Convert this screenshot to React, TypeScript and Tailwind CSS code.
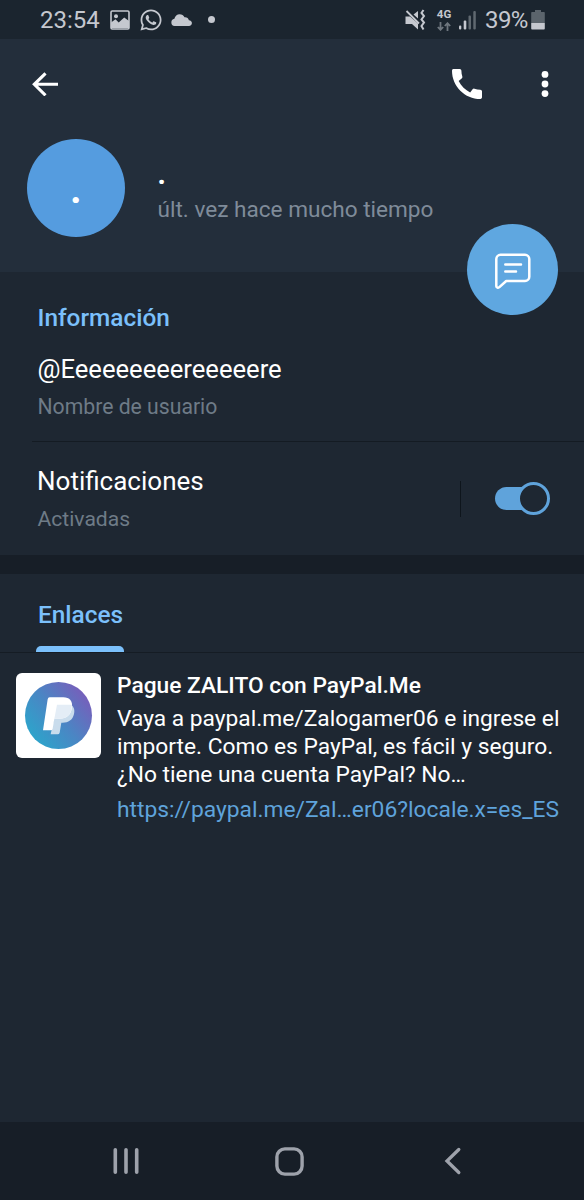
import { FaWhatsapp } from "react-icons/fa";
import { MdCall } from "react-icons/md";

function StatusBar() {
  return (
    <div className="flex h-[39px] items-center bg-[#1b252f] pl-10 text-[24px] leading-[40px] text-[#c5c8cf]">
      <span className="w-[60px]">23:54</span>
      <svg className="ml-[10px] h-5 w-5" viewBox="0 0 20 20">
        <rect x="1" y="1" width="18" height="18" rx="1.2" fill="none" stroke="currentColor" strokeWidth="1.6" />
        <circle cx="6" cy="6.2" r="2" fill="currentColor" />
        <path d="M1 18V12.500L5.500 9.300L8.700 12.400L14.200 7.600L19 11V18Z" fill="currentColor" />
      </svg>
      <FaWhatsapp className="ml-[9px] h-6 w-6" />
      <svg className="ml-2 h-3 w-[21px]" viewBox="0 0 21 12" fill="currentColor">
        <path d="M3.500 12A3.700 3.700 0 0 1 3.400 4.700C4 2 6 .2 8.600 .2C10.800 .2 12.600 1.300 13.500 3.300C15.800 3 17.400 4.300 17.900 6.200C19.800 6.300 20.900 7.500 20.900 9.100C20.900 10.800 19.700 12 18 12Z" />
      </svg>
      <span className="ml-4 h-[7px] w-[7px] rounded-full bg-current" />
      <svg className="ml-auto h-[22px] w-[21px]" viewBox="0 0 21 22" fill="currentColor">
        <path d="M0.5 7.5H5L13 14.5V20.5L7 15H0.5Z" />
        <path d="M8.5 5.5L13 2V9.5Z" />
        <path d="M1.500 2L14 14.5" stroke="currentColor" strokeWidth="1.8" />
        <path d="M18.5 1L16.5 4L19 7L16.5 10.5L19 13.5L16.5 17L18.5 20.5" fill="none" stroke="currentColor" strokeWidth="2" />
      </svg>
      <span className="ml-[10px] flex w-[16px] flex-col items-center">
        <span className="text-[11.5px] font-bold leading-[11px]">4G</span>
        <svg className="mt-[2px] h-[9px] w-[14px] text-[#6f777f]" viewBox="0 0 14 9" fill="none" stroke="currentColor" strokeWidth="1.8">
          <path d="M3.5 0V8M.8 5L3.5 7.8L6.2 5M10.5 9V1M7.8 4L10.5 1.2L13.2 4" />
        </svg>
      </span>
      <svg className="ml-[7px] h-5 w-[18px]" viewBox="0 0 18 20" fill="currentColor">
        <rect x="0" y="15.5" width="2.3" height="4" rx="1" />
        <rect x="4.7" y="10.5" width="2.6" height="9" rx="1" />
        <rect x="9.5" y="5.5" width="2.5" height="14" rx="1" fill="#606970" />
        <rect x="14.3" y="1" width="2.5" height="18.5" rx="1" fill="#606970" />
      </svg>
      <span className="ml-2 w-[46px] tracking-[-0.6px]">39%</span>
      <svg className="mr-[39px] h-5 w-[14px]" viewBox="0 0 14 20">
        <path d="M4 0H10V2H13A.8.8 0 0 1 13.8 2.8V13H.2V2.8A.8.8 0 0 1 1 2H4Z" fill="#5b646c" />
        <path d="M.2 13H13.8V18.5A1 1 0 0 1 13 19.5H1A1 1 0 0 1 .2 18.5Z" fill="currentColor" />
      </svg>
    </div>
  );
}

function Header() {
  return (
    <header className="relative h-[233px] bg-[#232e3b]">
      <div className="flex h-[90px] items-center pl-8">
        <svg className="h-6 w-[26px]" viewBox="0 0 26 24" fill="none" stroke="#fff" strokeWidth="3.1">
          <path d="M26 12.300H2.500M13.500 1.300L2.300 12.300L13.500 23.300" />
        </svg>
        <MdCall className="ml-[389px] h-10 w-10 text-white" />
        <svg className="ml-[53px] h-[26px] w-[10px]" viewBox="0 0 10 26" fill="#fff">
          <circle cx="5" cy="3.4" r="3.4" />
          <circle cx="5" cy="13" r="3.4" />
          <circle cx="5" cy="22.6" r="3.4" />
        </svg>
      </div>
      <div className="flex pl-[27px] pt-[10px]">
        <div className="h-[98px] w-[98px] rounded-full bg-[#559cdf] text-center text-[46px] font-medium leading-[96px] text-white">
          .
        </div>
        <div className="ml-8 pt-[19px]">
          <div className="h-[38px] text-[34px] font-medium leading-[28px] text-white">.</div>
          <div className="pl-[0.5px] text-[22.6px] leading-[28px] text-[#7f8b99]">últ. vez hace mucho tiempo</div>
        </div>
      </div>
      <button className="absolute left-[467px] top-[185px] flex h-[91px] w-[91px] items-center justify-center rounded-full bg-[#5fa7e0]">
        <svg className="mt-[2px] h-9 w-9" viewBox="0 0 36 36" fill="none" stroke="#fff" strokeWidth="2.5" strokeLinecap="round" strokeLinejoin="round">
          <path d="M5.500 1.800H30A4.300 4.300 0 0 1 34.300 6V23.700A4.300 4.300 0 0 1 30 28H11.200L4.400 34.200C3.300 35.200 1.300 34.500 1.300 33.200V6A4.300 4.300 0 0 1 5.500 1.800Z" />
          <path d="M10.300 11.500H26M10.300 18.500H21" />
        </svg>
      </button>
    </header>
  );
}

function Info() {
  return (
    <section className="h-[283px] pt-8">
      <div className="pl-[37.5px]">
        <h2 className="text-[24.4px] font-medium leading-[28px] text-[#7bc0fb]">Información</h2>
        <div className="mt-[23px] text-[25.6px] leading-[28px] text-white">@Eeeeeeeeereeeeere</div>
        <div className="mt-[10px] text-[21.2px] leading-[28px] text-[#6e7b87]">Nombre de usuario</div>
      </div>
      <div className="ml-8 mt-5 h-px bg-[#141b23]" />
      <div className="flex h-[113px] items-center pl-[37px]">
        <div className="w-[423px] pt-[3px]">
          <div className="text-[26px] leading-[28px] text-white">Notificaciones</div>
          <div className="mt-[10px] pl-[0.5px] text-[21.1px] leading-[28px] text-[#6e7b87]">Activadas</div>
        </div>
        <div className="h-9 w-px bg-[#0e151c]" />
        <div className="ml-[34px] flex h-[33px] w-[55px] items-center">
          <div className="h-[23px] w-9 rounded-l-full bg-[#5fa3db]" />
          <div className="-ml-[14px] h-[33px] w-[33px] shrink-0 rounded-full border-[3px] border-[#5fa3db] bg-[#1e2732]" />
        </div>
      </div>
    </section>
  );
}

function PayPalTile() {
  return (
    <svg className="mt-[2px] h-[85px] w-[85px] shrink-0" viewBox="48 99 255 255">
      <defs>
        <linearGradient id="disc" x1="0.1" y1="0.85" x2="0.9" y2="0.2">
          <stop offset="0" stopColor="#2ca5cb" />
          <stop offset="0.5" stopColor="#4a86c4" />
          <stop offset="1" stopColor="#7560bb" />
        </linearGradient>
      </defs>
      <rect x="48" y="99" width="255" height="255" rx="18" fill="#fff" />
      <circle cx="175.500" cy="226.500" r="100.500" fill="url(#disc)" />
      <path d="M171 194H212C222 199 225 210 222 222C218 240 205 248 188 248H184L179 278Q178 283 173 283H152Z" fill="#c9dcec" />
      <path d="M149 172H190C209 172 219 184 216 203C213 225 199 236 179 236H163L158 266Q157 271 152 271H129L143 178Q144 172 149 172Z" fill="#fff" />
      <path d="M171 194H215C217 220 202 236 179 236H163Z" fill="#e4edf6" />
    </svg>
  );
}

function Links() {
  return (
    <section className="flex-1">
      <div className="flex h-[78px] flex-col justify-between pl-9 pt-[27px]">
        <div className="pl-[2px] text-[24.4px] font-medium leading-[28px] text-[#7bc0fb]">Enlaces</div>
        <div className="h-[6px] w-[88px] rounded-t-[5px] bg-[#7bc0fb]" />
      </div>
      <div className="h-px bg-[#151c24]" />
      <div className="flex pl-4 pt-[18px]">
        <PayPalTile />
        <div className="ml-4 whitespace-nowrap pt-px text-[22.75px] leading-[28px] text-white">
          <div className="font-medium">Pague ZALITO con PayPal.Me</div>
          <p className="mt-[5px]">
            Vaya a paypal.me/Zalogamer06 e ingrese el
            <br />
            importe. Como es PayPal, es fácil y seguro.
            <br />
            ¿No tiene una cuenta PayPal? No…
          </p>
          <div className="mt-[7px] text-[22.8px] text-[#5fa3db]">https://paypal.me/Zal…er06?locale.x=es_ES</div>
        </div>
      </div>
    </section>
  );
}

function NavBar() {
  return (
    <nav className="flex h-[78px] items-center bg-[#171e27] pl-[113px] text-[#9ea2ab]">
      <svg className="h-7 w-[26px]" viewBox="0 0 26 28" stroke="currentColor" strokeWidth="3.6" strokeLinecap="round">
        <path d="M2.3 2.800V25.200M13 2.800V25.200M23.700 2.800V25.200" />
      </svg>
      <svg className="ml-[136px] h-[29px] w-[29px]" viewBox="0 0 29 29" fill="none" stroke="currentColor" strokeWidth="3.4">
        <rect x="1.9" y="1.900" width="25.200" height="25.200" rx="8" />
      </svg>
      <svg className="ml-[140px] h-7 w-[18px]" viewBox="0 0 18 28" fill="none" stroke="currentColor" strokeWidth="3.300" strokeLinecap="round">
        <path d="M14.800 2.500L3 14L14.800 25.500" />
      </svg>
    </nav>
  );
}

export default function App() {
  return (
    <div className="flex h-[1200px] w-[584px] flex-col overflow-hidden bg-[#1e2732] font-[Roboto,sans-serif]">
      <StatusBar />
      <Header />
      <Info />
      <div className="h-[19px] bg-[#171e27]" />
      <Links />
      <NavBar />
    </div>
  );
}
